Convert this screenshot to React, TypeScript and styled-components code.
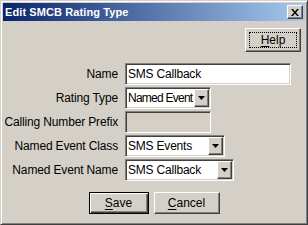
import * as React from 'react'
import styled, { createGlobalStyle, css } from 'styled-components'

const FACE = '#d4d0c8'

const Global = createGlobalStyle`
  html, body {
    margin: 0;
    padding: 0;
    background: #ffffff;
  }
  body {
    font-family: "Liberation Sans", Arial, sans-serif;
    font-size: 11px;
    color: #000;
  }
`

const raised = css`
  border: 1px solid;
  border-color: #ffffff #404040 #404040 #ffffff;
  box-shadow: inset -1px -1px #808080, inset 1px 1px ${FACE};
`

const sunken = css`
  border: 1px solid;
  border-color: #808080 #ffffff #ffffff #808080;
  box-shadow: inset 1px 1px #404040, inset -1px -1px ${FACE};
`

const Window = styled.div`
  width: 308px;
  height: 225px;
  box-sizing: border-box;
  background: ${FACE};
  border: 1px solid;
  border-color: ${FACE} #404040 #404040 ${FACE};
  box-shadow: inset 1px 1px #ffffff, inset -1px -1px #808080;
  padding: 2px;
  display: flex;
  flex-direction: column;
`

const TitleBar = styled.div`
  height: 18px;
  display: flex;
  align-items: center;
  justify-content: space-between;
  padding: 0 2px 0 2px;
  background: linear-gradient(to right, #0a246a, #a6caf0);
  color: #fff;
  font-weight: bold;
  font-size: 11px;
  letter-spacing: 0.1px;
`

const CloseBox = styled.div`
  width: 16px;
  height: 14px;
  box-sizing: border-box;
  background: ${FACE};
  ${raised};
  display: flex;
  align-items: center;
  justify-content: center;
`

const Body = styled.div`
  flex: 1;
  display: flex;
  flex-direction: column;
  padding: 7px 4px 0 0;
`

const HelpRow = styled.div`
  display: flex;
  justify-content: flex-end;
`

const Button = styled.div<{ $w: number; $default?: boolean }>`
  width: ${p => p.$w}px;
  height: 22px;
  box-sizing: border-box;
  background: ${FACE};
  display: flex;
  align-items: center;
  justify-content: center;
  font-size: 12px;
  ${p =>
    p.$default
      ? css`
          border: 1px solid #000;
          box-shadow: inset 1px 1px #fff, inset -1px -1px #404040, inset -2px -2px #808080;
        `
      : raised};
`

const HelpButton = styled(Button)`
  height: 24px;
  padding: 3px;
`

const Focus = styled.div`
  flex: 1;
  align-self: stretch;
  border: 1px dotted #000;
  display: flex;
  align-items: center;
  justify-content: center;
`

const Mn = styled.span`
  text-decoration: underline;
  text-underline-offset: 2px;
`

const Form = styled.div`
  margin-top: 11px;
  display: grid;
  grid-template-columns: 115px auto;
  column-gap: 7px;
  row-gap: 2px;
  align-items: center;
`

const Label = styled.div`
  text-align: right;
  font-size: 12px;
  letter-spacing: -0.15px;
  white-space: nowrap;
`

const Field = styled.div<{ $w: number; $disabled?: boolean }>`
  width: ${p => p.$w}px;
  height: 22px;
  box-sizing: border-box;
  ${sunken};
  background: ${p => (p.$disabled ? FACE : '#fff')};
  display: flex;
  align-items: center;
  padding-left: 2px;
  font-size: 12px;
  letter-spacing: -0.2px;
  white-space: nowrap;
  overflow: hidden;
`

const FieldText = styled.span<{ $tight?: boolean }>`
  flex: 1;
  min-width: 0;
  overflow: hidden;
  letter-spacing: ${p => (p.$tight ? '-0.75px' : '-0.2px')};
`

const ArrowBtn = styled.div`
  flex: none;
  width: 15px;
  height: 18px;
  box-sizing: border-box;
  margin-right: 1px;
  background: ${FACE};
  ${raised};
  display: flex;
  align-items: center;
  justify-content: center;
`

const Actions = styled.div`
  margin-top: 11px;
  display: flex;
  justify-content: center;
  gap: 5px;
  padding-left: 4px;
`

function Arrow() {
  return (
    <svg width="7" height="4" viewBox="0 0 7 4">
      <path d="M0 0h7L3.5 4z" fill="#000" />
    </svg>
  )
}

function Combo({ w, value, tight }: { w: number; value: string; tight?: boolean }) {
  return (
    <Field $w={w}>
      <FieldText $tight={tight}>{value}</FieldText>
      <ArrowBtn>
        <Arrow />
      </ArrowBtn>
    </Field>
  )
}

export default function App() {
  return (
    <>
      <Global />
      <Window>
        <TitleBar>
          <span>Edit SMCB Rating Type</span>
          <CloseBox>
            <svg width="8" height="7" viewBox="0 0 8 7">
              <path d="M0 0h2l2 2.5L6 0h2L5 3.5 8 7H6L4 4.5 2 7H0l3-3.5z" fill="#000" />
            </svg>
          </CloseBox>
        </TitleBar>
        <Body>
          <HelpRow>
            <HelpButton $w={56}>
              <Focus>
                <span>
                  <Mn>H</Mn>elp
                </span>
              </Focus>
            </HelpButton>
          </HelpRow>
          <Form>
            <Label>Name</Label>
            <Field $w={166}>SMS Callback</Field>
            <Label>Rating Type</Label>
            <Combo w={86} value="Named Event" tight />
            <Label>Calling Number Prefix</Label>
            <Field $w={86} $disabled />
            <Label>Named Event Class</Label>
            <Combo w={100} value="SMS Events" />
            <Label>Named Event Name</Label>
            <Combo w={109} value="SMS Callback" />
          </Form>
          <Actions>
            <Button $w={60} $default>
              <span>
                <Mn>S</Mn>ave
              </span>
            </Button>
            <Button $w={66}>
              <span>
                <Mn>C</Mn>ancel
              </span>
            </Button>
          </Actions>
        </Body>
      </Window>
    </>
  )
}
